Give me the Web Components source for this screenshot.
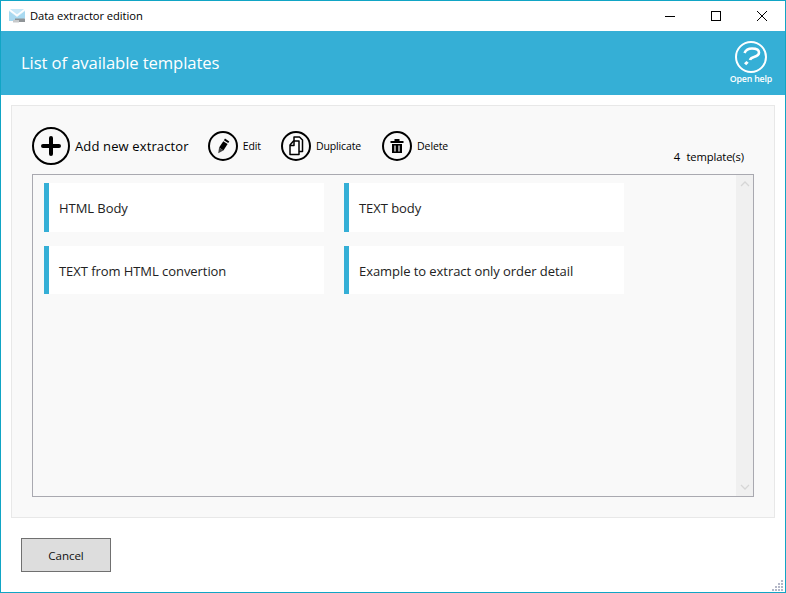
<!DOCTYPE html>
<html><head><meta charset="utf-8"><style>
html,body{margin:0;padding:0;background:#fff}
body{font-family:"Open Sans","Noto Sans",sans-serif;width:786px;height:593px;overflow:hidden}
</style></head><body>
<app-window></app-window>
<script>
function def(name, html){
  customElements.define(name, class extends HTMLElement{
    constructor(){super();const r=this.attachShadow({mode:'open'});r.innerHTML=html;}
  });
}
const FONT='"Open Sans","Noto Sans",sans-serif';
def('title-bar',`<style>
:host{display:flex;align-items:center;height:30px;background:#fff;flex:none}
.ic{margin-left:8px;width:16px;height:14px;display:block}
.t{margin-left:5px;font:400 11.2px/30px ${FONT};letter-spacing:-.07px;color:#000;flex:1}
.b{width:46px;height:30px;display:flex;align-items:center;justify-content:center}
</style>
<svg class="ic" viewBox="0 0 16 14"><path d="M0 1.500l8 6 8-6V9l-3 3H0z" fill="#a9d9f0"/><path d="M1 0h14L8 5.500z" fill="#c8e8f8"/><path d="M0 1.500l8 6 8-6" fill="none" stroke="#eef8fd" stroke-width=".8"/><path d="M6 9.500h10V13H6z" fill="#8f9497"/><path d="M4 11h6v2.500H4z" fill="#c6c9cb"/></svg>
<span class="t">Data extractor edition</span>
<div class="b"><svg width="12" height="12" viewBox="0 0 12 12"><path d="M1 6.500h10" stroke="#000" fill="none"/></svg></div>
<div class="b"><svg width="12" height="12" viewBox="0 0 12 12"><rect x="1.500" y="1.500" width="9" height="9" stroke="#000" fill="none"/></svg></div>
<div class="b"><svg width="12" height="12" viewBox="0 0 12 12"><path d="M1 1l10 10M11 1L1 11" stroke="#000" fill="none"/></svg></div>`);
def('page-header',`<style>
:host{display:flex;align-items:center;justify-content:space-between;height:64px;background:#35afd6;flex:none;color:#fff}
.t{margin-left:20px;font:400 16.650px/1 ${FONT};letter-spacing:-.1px;padding-top:1px}
.h{display:flex;flex-direction:column;align-items:center;margin-right:13px}
.h span{font:600 8.800px/11px ${FONT};letter-spacing:-.2px;margin-top:1px}
svg{display:block}
</style>
<span class="t">List of available templates</span>
<div class="h"><svg width="32" height="32" viewBox="0 0 32 32" fill="none" stroke="#fff" stroke-width="2"><circle cx="16" cy="16" r="15"/><path d="M9.500 12C11 8.500 14 7.500 17 7.500c4 0 7 1.500 7 4 0 2.500-2.500 3.800-5 4.500-2 .6-3.500 1.300-4 3" stroke-width="2.600"/><path d="M9 22.200l2.500-2.200 2.200 1.800-2.500 2.400z" fill="#fff" stroke="none"/></svg><span>Open help</span></div>`);
def('tool-button',`<style>
:host{display:flex;align-items:center;color:#000}
.c{display:flex;align-items:center;justify-content:center;box-sizing:border-box;border:2px solid #000;border-radius:50%;width:var(--d,30px);height:var(--d,30px);flex:none}
.l{margin-left:var(--g,5px);padding-top:2px;font:400 var(--fs,10.500px)/1 ${FONT};letter-spacing:var(--ls,-.12px);white-space:nowrap}
::slotted(svg){display:block}
</style><div class="c"><slot name="icon"></slot></div><span class="l"><slot></slot></span>`);
def('template-card',`<style>
:host{display:flex;align-items:center;box-sizing:border-box;width:280px;height:var(--h,49px);background:#fff;border-left:5px solid #35afd6;padding:var(--pt,1px) 0 0 10px;font:400 13px/1 ${FONT};letter-spacing:-.06px;color:#222}
</style><slot></slot>`);
def('v-scroll',`<style>
:host{display:flex;flex-direction:column;justify-content:space-between;align-items:center;width:17px;background:#f0f0f0;flex:none;box-sizing:border-box;padding:6px 0}
svg{display:block}
</style><svg width="10" height="6" viewBox="0 0 10 6"><path d="M1 5l4-4 4 4" fill="none" stroke="#d6d6d6" stroke-width="1.300"/></svg><svg width="10" height="6" viewBox="0 0 10 6"><path d="M1 1l4 4 4-4" fill="none" stroke="#d6d6d6" stroke-width="1.300"/></svg>`);
def('list-box',`<style>
:host{display:flex;box-sizing:border-box;height:323px;border:1px solid #a9a9b0;background:#f9f9f9;flex:none}
.g{flex:1;display:grid;grid-template-columns:280px 280px;grid-auto-rows:min-content;column-gap:20px;row-gap:14px;padding:8px 0 0 11px}
</style><div class="g"><slot></slot></div><v-scroll></v-scroll>`);
def('app-window',`<style>
:host{display:flex;flex-direction:column;box-sizing:border-box;width:786px;height:593px;border:1px solid #11a5c5;background:#fff;position:relative}
.panel{margin:10px 10px 0 10px;box-sizing:border-box;height:413px;background:#f9f9f9;border:1px solid #e8e8e8;padding:20px 20px 0 20px;display:flex;flex-direction:column}
.bar{display:flex;align-items:center;height:39px;margin-bottom:9px;flex:none}
.cnt{margin-left:auto;align-self:flex-end;font:400 11.200px/1 ${FONT};word-spacing:3.500px;letter-spacing:-.1px;color:#000;margin-right:10px;margin-bottom:3px}
.foot{margin:20px 0 0 20px}
.cancel{display:block;box-sizing:border-box;width:90px;height:34px;background:#ddd;border:1px solid #707070;font:400 11.600px/1 ${FONT};letter-spacing:-.08px;color:#111;padding:2px 0 0}
.grip{position:absolute;right:1px;bottom:1px;display:block}
#add{--d:38px;--g:5px;--fs:13px;--ls:.13px;margin-right:19px}
#edit{--d:30px;margin-right:20px}
#dup{margin-right:21px}
list-box template-card:nth-child(n+3){--h:48px;--pt:3px}
</style>
<title-bar></title-bar>
<page-header></page-header>
<div class="panel">
  <div class="bar">
    <tool-button id="add"><svg slot="icon" width="22" height="22" viewBox="0 0 22 22"><path d="M11 3v16M3 11h16" stroke="#000" stroke-width="4" stroke-linecap="round"/></svg>Add new extractor</tool-button>
    <tool-button id="edit"><svg slot="icon" width="16" height="16" viewBox="0 0 16 16"><path d="M10 .6l4.300 2.800-1.100 1.700-4.300-2.800z" fill="#000"/><path d="M8.300 3.200l4.300 2.800-4.200 6.400-4.300-2.800z" fill="#000"/><path d="M4.100 9.600l4.300 2.800-5.200 2.800z" fill="#444"/></svg>Edit</tool-button>
    <tool-button id="dup"><svg slot="icon" width="18" height="20" viewBox="0 0 18 20" fill="#fff" stroke="#000" stroke-width="1.500" stroke-linejoin="round"><path d="M7 1h5.500l3 3v11.500H7z"/><path d="M3 9l3.500-4H12v13.500H3z"/><path d="M3 9.500h4V5" fill="none"/></svg>Duplicate</tool-button>
    <tool-button id="del"><svg slot="icon" width="16" height="16" viewBox="0 0 16 16"><path d="M1.500 3h13v2h-13zM5.500 1h5v2h-5z" fill="#000"/><path d="M3 6h10v9H3z" fill="#000"/><path d="M6 7.500v6M10 7.500v6" stroke="#fff" stroke-width="1.200"/></svg>Delete</tool-button>
    <span class="cnt">4 template(s)</span>
  </div>
  <list-box>
    <template-card>HTML Body</template-card>
    <template-card>TEXT body</template-card>
    <template-card>TEXT from HTML convertion</template-card>
    <template-card>Example to extract only order detail</template-card>
  </list-box>
</div>
<div class="foot"><button class="cancel">Cancel</button></div>
<svg class="grip" width="12" height="12" viewBox="0 0 12 12" fill="#b4b8c8"><rect x="9" y="1" width="2" height="2"/><rect x="6" y="4" width="2" height="2"/><rect x="9" y="4" width="2" height="2"/><rect x="3" y="7" width="2" height="2"/><rect x="6" y="7" width="2" height="2"/><rect x="9" y="7" width="2" height="2"/><rect x="0" y="10" width="2" height="2"/><rect x="3" y="10" width="2" height="2"/><rect x="6" y="10" width="2" height="2"/><rect x="9" y="10" width="2" height="2"/></svg>`);
</script>
</body></html>
